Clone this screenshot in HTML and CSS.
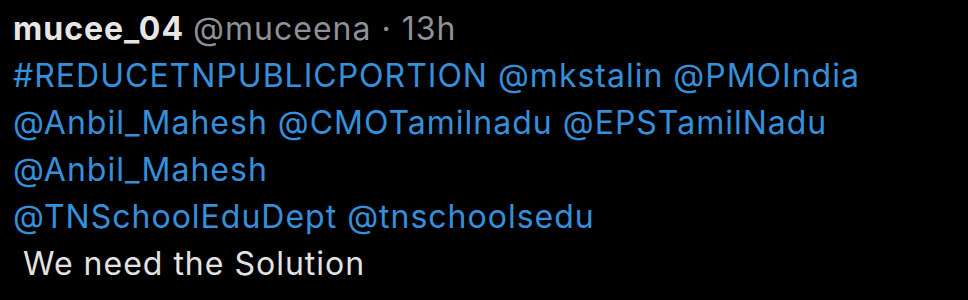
FILE: index.html
```html
<!DOCTYPE html>
<html lang="en">
<head>
  <meta charset="UTF-8" />
  <meta name="viewport" content="width=device-width, initial-scale=1" />
  <title>Tweet</title>
  <link rel="stylesheet" href="styles.css">
</head>
<body>

  <article class="tweet">
    <header class="tweet-head">
      <span class="tweet-name">mucee_04</span>
      <span class="tweet-meta">@muceena · 13h</span>
    </header>
    <div class="tweet-body">
      <p><a href="#" class="tag">#REDUCETNPUBLICPORTION</a> <a href="#" class="tag">@mkstalin</a> <a href="#" class="tag">@PMOIndia</a></p>
      <p><a href="#" class="tag">@Anbil_Mahesh</a> <a href="#" class="tag">@CMOTamilnadu</a> <a href="#" class="tag">@EPSTamilNadu</a></p>
      <p><a href="#" class="tag">@Anbil_Mahesh</a></p>
      <p><a href="#" class="tag">@TNSchoolEduDept</a> <a href="#" class="tag">@tnschoolsedu</a></p>
      <p class="plain">&nbsp;We need the Solution</p>
    </div>
  </article>

</body>
</html>
```

FILE: styles.css
```css
/* Reset and base */
* {
  box-sizing: border-box;
}
body {
  margin: 0;
  background-color: #000;
  color: #e7e9ea;
  font-family: Inter, "Noto Sans", sans-serif;
  height: 300px;
  overflow: hidden;
}

/* Tweet */
.tweet {
  padding: 5px 13px 0;
  font-size: 32px;
  line-height: 47px;
  letter-spacing: 1px;
}
.tweet-head {
  display: flex;
  gap: 9px;
}
.tweet-name {
  font-weight: 700;
  color: #e6e6e6;
}
.tweet-meta {
  color: #8e9196;
}
.tweet-body p {
  margin: 0;
}
.tag {
  color: #3590dc;
  text-decoration: none;
}
.plain {
  color: #e2e2e2;
}
```
